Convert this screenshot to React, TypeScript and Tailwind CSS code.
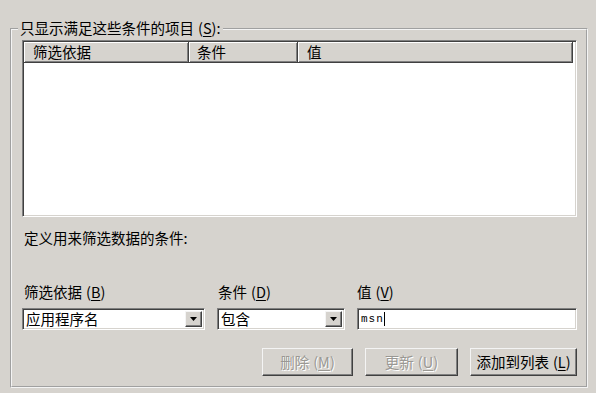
import React from "react";

const FONT = "font-['Noto_Sans_CJK_SC','Noto_Sans',sans-serif]";

function Mnemonic({ k }: { k: string }) {
  return (
    <span className="ml-[4px]">
      (<span className="underline underline-offset-[2px]">{k}</span>)
    </span>
  );
}

function Combo({ value, width }: { value: string; width: string }) {
  return (
    <div
      className={`flex h-[22px] items-stretch border border-[#808080] border-r-white border-b-white bg-white shadow-[inset_1px_1px_0_#404040,inset_-1px_-1px_0_#d6d3ce] ${width}`}
    >
      <div className="flex flex-1 items-center pl-[3px] text-[14.5px] leading-none">{value}</div>
      <div className="my-[2px] mr-[2px] flex w-[17px] items-center justify-center border border-[#f4f4f4] border-r-[#404040] border-b-[#404040] bg-[#d6d3ce] shadow-[inset_-1px_-1px_0_#808080]">
        <svg width="7" height="4" viewBox="0 0 7 4">
          <path d="M0 0h7L3.5 4z" fill="#000" />
        </svg>
      </div>
    </div>
  );
}

function Button({ label, k, width, disabled }: { label: string; k: string; width: string; disabled?: boolean }) {
  return (
    <button
      className={`flex h-[28px] items-center justify-center border border-[#f4f4f4] border-r-[#404040] border-b-[#404040] bg-[#d6d3ce] text-[14.5px] shadow-[inset_-1px_-1px_0_#808080] ${width} ${
        disabled ? "text-[#9a9893] [text-shadow:1px_1px_0_#fff]" : "text-black"
      }`}
    >
      {label}
      <Mnemonic k={k} />
    </button>
  );
}

export default function App() {
  return (
    <div className={`h-[393px] w-[596px] bg-[#d6d3ce] px-[10px] pt-[28px] text-black ${FONT}`}>
      {/* group box */}
      <div className="w-[578px] border-2 border-[#f4f4f4] [border-style:groove] pb-[10px] pl-[10px] pr-[9px]">
        <div className="-ml-[4px] -mt-[11px] w-fit bg-[#d6d3ce] px-[2px] text-[14.5px] leading-[18px]">
          只显示满足这些条件的项目
          <Mnemonic k="S" />:
        </div>

        <div className="mt-[3px] flex h-[177px] flex-col border border-[#808080] border-r-white border-b-white bg-white p-[1px] shadow-[inset_1px_1px_0_#404040,inset_-1px_-1px_0_#d6d3ce]">
          <div className="flex h-[21px] text-[14.5px] leading-none">
            <div className="flex w-[165px] items-center border-r border-b border-[#404040] bg-[#d6d3ce] pl-[9px] shadow-[inset_1px_1px_0_#fff,inset_-1px_-1px_0_#808080]">
              筛选依据
            </div>
            <div className="flex w-[109px] items-center border-r border-b border-[#404040] bg-[#d6d3ce] pl-[8px] shadow-[inset_1px_1px_0_#fff,inset_-1px_-1px_0_#808080]">
              条件
            </div>
            <div className="mr-[2px] flex flex-1 items-center border-r border-b border-[#404040] bg-[#d6d3ce] pl-[9px] shadow-[inset_1px_1px_0_#fff,inset_-1px_-1px_0_#808080]">
              值
            </div>
          </div>
        </div>

        <div className="mt-[12px] pl-[2px] text-[14.5px] leading-[18px]">定义用来筛选数据的条件:</div>

        <div className="mt-[36px] flex gap-[12px]">
          <div className="flex w-[183px] flex-col gap-[7px]">
            <div className="pl-[2px] text-[14.5px] leading-[18px]">
              筛选依据
              <Mnemonic k="B" />
            </div>
            <Combo value="应用程序名" width="w-[183px]" />
          </div>
          <div className="flex w-[128px] flex-col gap-[7px]">
            <div className="pl-[1px] text-[14.5px] leading-[18px]">
              条件
              <Mnemonic k="D" />
            </div>
            <Combo value="包含" width="w-[128px]" />
          </div>
          <div className="flex flex-1 flex-col gap-[7px]">
            <div className="text-[14.5px] leading-[18px]">
              值
              <Mnemonic k="V" />
            </div>
            <div className="flex h-[22px] items-center border border-[#808080] border-r-white border-b-white bg-white pl-[3px] shadow-[inset_1px_1px_0_#404040,inset_-1px_-1px_0_#d6d3ce]">
              <span className="font-['Liberation_Mono',monospace] text-[11px] tracking-[1px]">msn</span>
              <span className="h-[14px] w-px bg-black" />
            </div>
          </div>
        </div>

        <div className="mt-[18px] flex justify-end gap-[12px]">
          <Button label="删除" k="M" width="w-[91px]" disabled />
          <Button label="更新" k="U" width="w-[93px]" disabled />
          <Button label="添加到列表" k="L" width="w-[107px]" />
        </div>
      </div>
    </div>
  );
}
